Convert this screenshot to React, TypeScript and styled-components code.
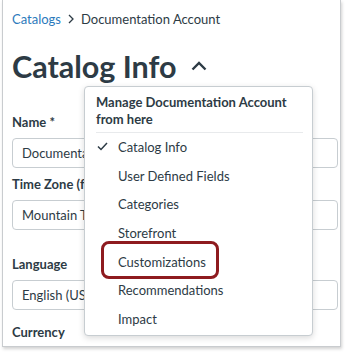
import React from 'react';
import styled, { createGlobalStyle } from 'styled-components';

const GlobalStyles = createGlobalStyle`
  html, body {
    margin: 0;
    padding: 0;
    background: #fff;
  }
  body {
    font-family: Lato, "Open Sans", sans-serif;
    color: #2D3B45;
    width: 345px;
    height: 352px;
    overflow: hidden;
  }
`

const Frame = styled.div`
  position: relative;
  box-sizing: border-box;
  width: 339px;
  height: 347px;
  margin-left: 2px;
  padding: 9px 2px 0 9px;

  background: #fff;
  border: 1px solid #C9CCCF;
  border-top: none;
  box-shadow: 1px 2px 3px rgba(0, 0, 0, 0.18);
  overflow: hidden;
`

const Breadcrumb = styled.nav`
  display: flex;
  align-items: center;
  gap: 6px;
  font-size: 13px;
  line-height: 20px;
`

const Crumb = styled.span<{ link?: boolean }>`
  color: ${({ link }) => (link ? '#2B7ABC' : '#2D3B45')};
`

const Heading = styled.h1`
  display: flex;
  align-items: center;
  gap: 14px;
  margin: 17px 0 0;
  font-size: 30.5px;
  line-height: 40px;
  font-weight: 700;
  color: #2D3B45;
`

const Field = styled.div<{ top: number }>`
  display: flex;
  flex-direction: column;
  margin-top: ${({ top }) => top}px;
`

const Label = styled.label`
  font-size: 13px;
  line-height: 20px;
  font-weight: 700;
  color: #2D3B45;
`

const Input = styled.div`
  box-sizing: border-box;
  height: 30px;
  margin-top: 6px;
  padding: 0 9px;
  display: flex;
  align-items: center;

  border: 1px solid #C7CDD1;
  border-radius: 4px;
  font-size: 13px;
  color: #2D3B45;
  white-space: nowrap;
`

const Menu = styled.div`
  position: absolute;
  left: 81px;
  top: 86px;
  box-sizing: border-box;
  width: 229px;
  height: 250px;
  padding-bottom: 3px;

  background: #fff;
  border: 1px solid #C7CDD1;
  border-radius: 4px;
  box-shadow: 0 2px 6px rgba(0, 0, 0, 0.15);
`

const MenuHeader = styled.div`
  padding: 7px 10px 4px 11px;
  font-size: 13px;
  line-height: 17px;
  font-weight: 700;
  color: #2D3B45;
`

const Divider = styled.hr`
  margin: 0 9px 0 11px;
  border: none;
  border-top: 1px solid #E8EAEC;
`

const MenuItem = styled.div`
  position: relative;
  display: flex;
  align-items: center;
  height: 28.6px;
  padding-left: 33px;
  font-size: 13px;
  color: #2D3B45;
`

const Check = styled.svg`
  position: absolute;
  left: 12px;
  top: 50%;
  margin-top: -5px;
`

const Highlight = styled.span`
  position: absolute;
  left: 16px;
  top: 50%;
  width: 118px;
  height: 38px;
  margin-top: -21px;
  box-sizing: border-box;
  border: 3px solid #8E1B1F;
  border-radius: 8px;
`

const items = [
  'Catalog Info',
  'User Defined Fields',
  'Categories',
  'Storefront',
  'Customizations',
  'Recommendations',
  'Impact',
]

function App() {
  return (
    <>
      <GlobalStyles />
      <Frame>
        <Breadcrumb>
          <Crumb link>Catalogs</Crumb>
          <svg width="8" height="10" viewBox="0 0 8 10">
            <polyline points="2,1 6,5 2,9" fill="none" stroke="#2D3B45" strokeWidth="1.3" />
          </svg>
          <Crumb>Documentation Account</Crumb>
        </Breadcrumb>
        <Heading>
          Catalog Info
          <svg width="16" height="10" viewBox="0 0 16 10">
            <polyline points="1.5,8.5 8,2 14.5,8.5" fill="none" stroke="#2D3B45" strokeWidth="2.4" />
          </svg>
        </Heading>
        <Field top={26}>
          <Label>Name *</Label>
          <Input>Documentation Account</Input>
        </Field>
        <Field top={6}>
          <Label>Time Zone (for reporting)</Label>
          <Input>Mountain Time (US &amp; Canada)</Input>
        </Field>
        <Field top={24}>
          <Label>Language</Label>
          <Input>English (US)</Input>
        </Field>
        <Field top={12}>
          <Label>Currency</Label>
        </Field>
        <Menu>
          <MenuHeader>Manage Documentation Account from here</MenuHeader>
          <Divider />
          {items.map((item, i) => (
            <MenuItem key={item}>
              {i === 0 && (
                <Check width="11" height="9" viewBox="0 0 11 9">
                  <polyline points="1,4.5 4,7.5 10,1" fill="none" stroke="#2D3B45" strokeWidth="1.5" />
                </Check>
              )}
              {item === 'Customizations' && <Highlight />}
              {item}
            </MenuItem>
          ))}
        </Menu>
      </Frame>
    </>
  );
}

export default App;
